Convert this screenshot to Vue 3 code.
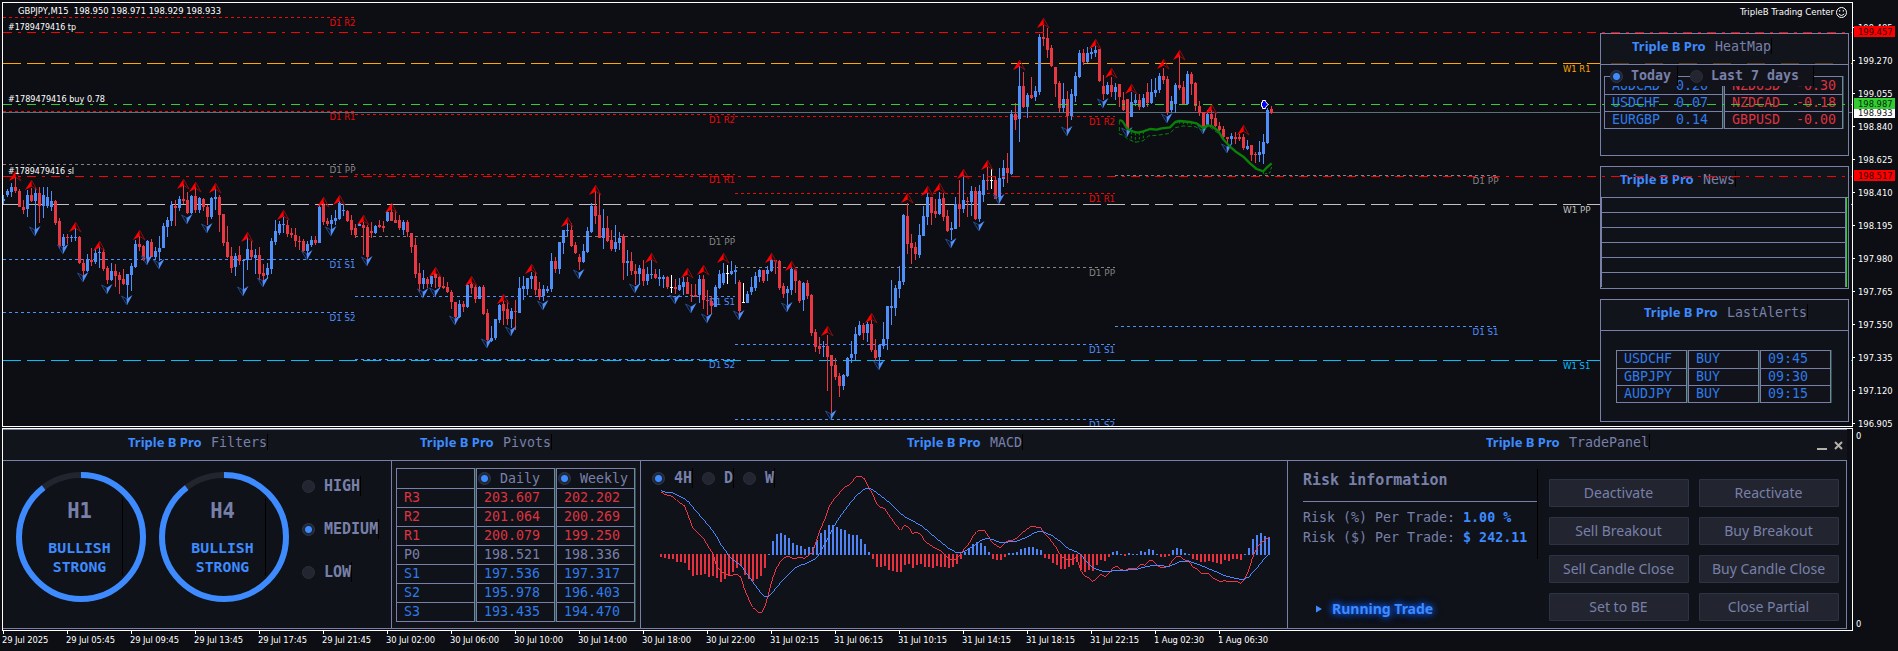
<template>
  <div class="terminal">
    <div class="chart">
      <svg class="chart-canvas" viewBox="3 3 1849 423" width="1849" height="423">
        <g shape-rendering="crispEdges">
          <line
            v-for="(l, i) in levels"
            :key="'l' + i"
            :x1="l.x1"
            :x2="l.x2"
            :y1="l.y + 0.5"
            :y2="l.y + 0.5"
            :stroke="l.color"
            :stroke-dasharray="l.dash"
          />
        </g>
        <text
          v-for="(l, i) in levelLabels"
          :key="'t' + i"
          :x="l.x"
          :y="l.y"
          :fill="l.color"
          text-anchor="end"
          :textLength="l.width"
          lengthAdjust="spacingAndGlyphs"
        >{{ l.text }}</text>
        <g shape-rendering="crispEdges">
          <g v-for="(c, i) in candles" :key="'c' + i" :fill="c.color">
            <rect :x="c.x" :y="c.high" width="1" :height="Math.max(1, c.low - c.high)" />
            <rect :x="c.x - 1" :y="c.top" width="3" :height="Math.max(1, c.bottom - c.top)" />
          </g>
        </g>
        <g v-for="(a, i) in upArrows" :key="'u' + i" :transform="`translate(${a.x} ${a.y})`">
          <path d="M0.5 0L6 10L0.5 6" fill="none" stroke="#8e0c10" />
          <path d="M0.5 0L-6 10L0.8 6.5Z" fill="#ff0000" />
        </g>
        <g v-for="(a, i) in downArrows" :key="'d' + i" :transform="`translate(${a.x} ${a.y})`">
          <path d="M0 0L-5.5 -9L0 -6" fill="none" stroke="#234a8c" />
          <path d="M0 0L5.5 -10L-0.5 -6Z" fill="#4f90ff" />
        </g>
        <g transform="translate(990 0) scale(0.33333)" fill="none" stroke="#0a820a">
          <polyline :points="trendLine" stroke-width="7" stroke-linejoin="round" />
          <polyline :points="trendShadow" stroke-width="3" stroke-dasharray="12 7" />
          <path d="M424 395V418M436 398V427M448 398V418M460 394V422M568 363V376M580 364V378M592 365V378M604 366V378" stroke-width="3" stroke-dasharray="8 5" />
          <path d="M820 514V523L840 518L845 500" stroke-width="3" stroke-dasharray="8 5" />
        </g>
        <g class="symbol" fill="#fff">
          <text x="18" y="14" textLength="203" lengthAdjust="spacingAndGlyphs">GBPJPY,M15&nbsp; 198.950 198.971 198.929 198.933</text>
          <text x="8" y="30" textLength="68" lengthAdjust="spacingAndGlyphs">#1789479416 tp</text>
          <text x="8" y="102" textLength="97" lengthAdjust="spacingAndGlyphs">#1789479416 buy 0.78</text>
          <text x="8" y="174" textLength="66" lengthAdjust="spacingAndGlyphs">#1789479416 sl</text>
          <text x="1740" y="15" textLength="94" lengthAdjust="spacingAndGlyphs">TripleB Trading Center</text>
        </g>
        <g fill="none" stroke="#fff">
          <circle cx="1841.5" cy="12.5" r="5" />
          <path d="M1838.8 13.8Q1841.5 17 1844.2 13.8" />
          <path d="M1839.7 10V11.6M1843.3 10V11.6" />
        </g>
      </svg>

      <aside class="side">
        <section class="widget">
          <h3 class="title heat-title"><b>Triple B Pro</b><span>HeatMap</span></h3>
          <i class="weekly-dash"></i>
          <div class="heat-body">
            <div class="grid-cols">
              <ul v-for="(col, i) in heatmap" :key="i" class="col heat-col" :class="i ? 'neg' : 'pos'">
                <li v-for="r in col" :key="r[0]"><span>{{ r[0] }}</span><span>{{ r[1] }}</span></li>
              </ul>
            </div>
            <div class="heat-range">
              <label class="today"><i class="radio on"></i>Today</label>
              <label><i class="radio"></i>Last 7 days</label>
            </div>
          </div>
        </section>
        <section class="widget">
          <h3 class="title news-title"><b>Triple B Pro</b><span>News</span></h3>
          <ul class="news"><li v-for="n in 6" :key="n"></li></ul>
        </section>
        <section class="widget">
          <h3 class="title alerts-title"><b>Triple B Pro</b><span>LastAlerts</span></h3>
          <div class="grid-cols alerts">
            <ul v-for="(col, i) in alerts" :key="i" class="col pos">
              <li v-for="(v, j) in col" :key="j">{{ v }}</li>
            </ul>
          </div>
        </section>
      </aside>

      <svg class="chart-canvas orders" viewBox="3 3 1849 423" width="1849" height="423">
        <g shape-rendering="crispEdges" stroke-dasharray="9 6 3 6">
          <line x1="3" x2="1852" y1="32.5" y2="32.5" stroke="#ff0000" />
          <line x1="3" x2="1852" y1="104.5" y2="104.5" stroke="#32cd32" />
          <line x1="3" x2="1852" y1="176.5" y2="176.5" stroke="#ff0000" />
        </g>
        <path d="M1262.5 102.5V100.5H1265.5V101.5L1268 104.5L1265.5 107.5V108.5H1262.5V106.5H1261.5V102.5Z" fill="#0000ff" stroke="#fff" />
      </svg>
    </div>

    <div class="price-axis">
      <div v-for="p in prices" :key="p" class="price">{{ p }}</div>
      <span class="tag red tp">199.457</span>
      <span class="tag green">198.987</span>
      <span class="tag white">198.933</span>
      <span class="tag red sl">198.517</span>
    </div>

    <div class="pane">
      <div class="dock">
        <section class="module">
          <h3 class="title filters-title"><b>Triple B Pro</b><span>Filters</span></h3>
          <div class="body filters">
            <div v-for="g in ['H1', 'H4']" :key="g" class="gauge">
              <svg width="130" height="130" viewBox="0 0 130 130">
                <circle cx="65" cy="65" r="62" />
                <circle class="value" cx="65" cy="65" r="62" pathLength="100" transform="rotate(-90 65 65)" />
              </svg>
              <div class="gauge-text">
                <strong>{{ g }}</strong>
                <em>BULLISH</em>
                <em>STRONG</em>
              </div>
            </div>
            <div class="strength">
              <label v-for="s in ['HIGH', 'MEDIUM', 'LOW']" :key="s">
                <i class="radio" :class="{ on: s === 'MEDIUM' }"></i><span>{{ s }}</span>
              </label>
            </div>
          </div>
        </section>

        <section class="module">
          <h3 class="title pivots-title"><b>Triple B Pro</b><span>Pivots</span></h3>
          <div class="body pivots">
            <div class="grid-cols">
              <ul class="col">
                <li></li>
                <li v-for="p in pivots" :key="p[0]" :class="p[3]">{{ p[0] }}</li>
              </ul>
              <ul v-for="(name, i) in ['Daily', 'Weekly']" :key="name" class="col">
                <li class="head"><i class="radio on"></i>{{ name }}</li>
                <li v-for="p in pivots" :key="p[0]" :class="p[3]">{{ p[i + 1] }}</li>
              </ul>
            </div>
          </div>
        </section>

        <section class="module">
          <h3 class="title macd-title"><b>Triple B Pro</b><span>MACD</span></h3>
          <div class="body macd">
            <svg width="646" height="167" viewBox="641 461 646 167" shape-rendering="crispEdges">
              <rect
                v-for="(v, i) in histogram"
                :key="i"
                :x="660 + i * 4"
                :y="v > 0 ? 555 - v : 554"
                width="2"
                :height="Math.abs(v)"
                :fill="v > 0 ? '#4f83f5' : '#e8303e'"
              />
              <g transform="translate(640 425) scale(0.33333)" fill="none" stroke-width="3">
                <polyline :points="macdLine" stroke="#ee3744" />
                <polyline :points="signalLine" stroke="#4f87ff" />
              </g>
            </svg>
            <div class="timeframes">
              <label v-for="t in ['4H', 'D', 'W']" :key="t">
                <i class="radio" :class="{ on: t === '4H' }"></i><span>{{ t }}</span>
              </label>
            </div>
          </div>
        </section>

        <section class="module">
          <h3 class="title trade-title">
            <b>Triple B Pro</b><span>TradePanel</span>
            <svg class="window-icons" width="28" height="12" viewBox="0 0 28 12">
              <path d="M0 9H10M18 2L25 9M25 2L18 9" stroke="#b4b0aa" stroke-width="2" fill="none" />
            </svg>
          </h3>
          <div class="body trade">
            <div class="risk">
              <div class="risk-info">
                <h4>Risk information</h4>
                <p>Risk (%) Per Trade: <b>1.00 %</b></p>
                <p>Risk ($) Per Trade: <b>$ 242.11</b></p>
              </div>
              <div class="running">
                <svg width="6" height="8" viewBox="0 0 6 8"><path d="M0 0.5L6 4L0 7.5Z" fill="#3d8bff" /></svg>
                <span>Running Trade</span>
              </div>
            </div>
            <div class="actions">
              <button v-for="a in actions" :key="a">{{ a }}</button>
            </div>
          </div>
        </section>
      </div>
    </div>

    <div class="sub-axis"><span>0</span><span>0</span></div>

    <div class="time-axis">
      <span v-for="t in times" :key="t">{{ t }}</span>
    </div>
  </div>
</template>

<script setup>
const RED = "#e83843";
const BLUE = "#4f8ff9";

// color, high, body top, body bottom, low
const rawCandles = `b195,199,201,204 b189,191,195,197 b183,187,192,197 r177,187,191,193 r189,191,207,207 r200,207,210,214
b190,195,209,217 r188,195,201,202 b187,193,201,230 r187,193,206,223 b187,195,206,218 b187,197,206,208 b191,201,207,211
r200,201,223,225 r218,221,246,249 b234,237,246,250 r234,237,238,244 b235,237,238,242 b228,237,238,241 r236,237,263,264
r259,263,271,276 b254,259,271,272 r248,260,262,266 b248,253,262,264 b246,252,253,268 r248,252,269,271 r266,268,280,284
b263,271,280,281 r264,271,276,287 r272,275,280,294 r269,279,284,285 b274,274,285,298 b263,266,275,291 b240,244,267,268
r236,244,247,251 r245,246,260,261 b240,241,259,261 r239,242,257,257 b247,251,257,260 b236,248,252,261 b223,226,248,248
b217,220,227,237 b201,205,221,226 r200,206,208,226 b196,199,208,211 r184,199,201,204 r192,200,213,214 b195,196,213,214
r187,196,210,213 b197,198,210,213 r198,199,207,211 r205,207,217,225 b197,198,217,219 b189,197,199,210 r195,197,215,232
r214,214,243,246 r226,242,257,258 r247,256,268,273 b253,256,267,276 r246,255,261,265 b259,260,261,290 b237,249,260,270
r241,250,257,259 b249,255,258,274 r247,255,274,280 r264,273,276,284 b263,268,275,279 b238,241,269,274 b220,231,242,245
b221,224,233,235 b217,224,225,233 r220,225,234,237 r228,233,235,238 r228,235,241,247 r236,241,242,250 r239,241,251,252
b241,244,251,256 b236,240,245,247 r236,240,243,245 b205,207,243,243 r202,205,222,225 r218,221,224,226 b215,220,224,230
b210,218,221,225 b201,203,219,220 b204,210,211,216 r210,211,221,222 r215,220,230,235 r224,228,235,238 b223,224,226,226
r222,225,228,255 r225,227,257,260 r222,231,233,238 b225,226,233,234 r220,225,227,228 r221,226,228,232 b211,212,221,222
r205,212,221,221 r210,220,223,223 r215,220,228,230 b220,222,230,235 r220,222,232,237 r233,233,247,253 r238,245,274,278
r263,273,284,292 b270,278,284,289 r277,279,284,288 b276,276,284,287 r273,274,278,288 r276,277,287,289 r277,286,288,289
r282,287,292,293 r290,292,302,309 r302,302,317,318 b300,304,317,318 r301,304,307,312 b284,285,307,308 r282,284,288,294
r285,287,299,303 b286,287,299,299 r285,287,314,315 r309,313,340,341 b326,338,341,342 b319,319,338,340 b304,305,320,323
r301,304,311,325 r300,309,319,325 b308,311,319,328 r300,311,312,330 b277,288,313,313 b276,286,289,300 b278,278,289,295
b272,276,279,289 r272,276,290,295 r282,289,297,300 b285,289,296,301 b286,289,291,293 b253,261,289,292 r257,261,269,273
b242,242,269,274 b230,230,243,254 b223,230,231,236 r223,230,246,247 r242,245,253,254 r254,257,262,270 b244,251,262,263
b227,231,252,253 b203,206,232,233 r191,206,216,224 r193,215,238,238 b209,228,238,249 r216,228,241,242 r230,240,249,251
b225,242,249,252 b232,238,243,250 r234,236,263,280 b250,261,263,276 r252,261,271,275 r264,271,274,285 b265,268,274,285
r260,269,281,286 b267,274,281,285 b260,274,275,279 r269,274,278,279 b269,277,279,286 b275,277,279,288 r276,277,287,289
w275,287,288,293 r279,287,289,294 b278,285,290,291 b277,282,287,295 r277,282,294,294 r284,295,296,302 r284,295,297,297
b275,279,295,303 r275,279,300,309 r290,300,301,315 r296,301,306,314 b285,287,307,307 b270,274,288,289 b263,273,283,285
w265,273,274,284 b261,271,274,275 b265,270,272,284 r280,282,311,314 w283,302,303,303 b291,294,303,303 b277,287,292,295
b272,276,288,291 b269,270,277,282 r270,270,281,283 b266,270,274,281 b259,260,271,272 r260,260,262,274 r260,261,288,290
r283,286,294,298 b286,289,293,305 b267,269,290,295 r269,269,281,293 r280,281,301,303 b282,283,300,311 r280,283,296,299
r294,295,333,336 r329,332,347,352 r337,346,349,354 b341,346,347,357 r335,346,357,391 r355,355,366,413 r358,365,377,380
r373,376,386,397 b374,375,386,390 b357,358,376,377 b341,354,358,363 b327,334,354,360 b321,325,335,336 r323,325,333,340
b322,324,333,342 r320,324,350,352 r339,350,358,361 b344,345,357,366 b322,339,346,349 b306,306,339,350 b280,306,308,325
b285,288,308,316 b266,281,289,298 b214,215,282,285 r203,216,244,254 r234,243,248,264 r242,247,254,260 b224,235,255,258
b206,216,236,236 b193,197,217,225 r197,197,213,225 r199,211,214,218 b192,199,214,215 r193,198,217,221 r210,216,231,232
b222,228,230,240 b197,204,229,229 r180,204,209,227 b175,200,209,213 r197,201,202,217 b186,191,202,216 r187,191,219,220
b185,191,219,222 b174,180,195,202 r167,180,181,190 w169,180,181,189 r177,180,199,199 b168,178,197,198 b160,168,179,187
r153,168,173,183 b110,114,174,175 r103,114,120,130 b66,86,119,142 r72,86,107,108 b93,95,107,118 r77,95,98,99
b86,91,97,101 b34,37,92,95 r25,37,39,46 r28,38,50,58 r45,48,66,67 r67,67,84,97 r81,83,108,112 b83,99,108,112
r91,99,116,130 b89,94,116,120 b72,76,96,102 b50,53,77,78 r49,53,62,65 b47,53,62,63 b48,52,54,59 b46,50,53,57
r49,49,81,82 r75,86,94,100 b82,85,94,95 r77,85,92,97 b83,87,92,100 r84,84,97,107 r92,100,110,111 r99,99,129,134
b92,102,117,117 b94,100,103,106 r94,100,107,110 b94,98,107,108 r83,92,103,107 b79,92,103,104 b78,90,93,97 b73,76,90,93
r68,76,80,84 r76,79,112,115 b96,101,110,112 b83,85,104,113 r55,85,88,90 r81,87,104,104 b71,74,104,105 r72,74,84,95
r82,83,106,111 r101,106,113,116 r112,112,128,130 b110,114,125,127 r110,114,119,125 r113,118,126,127 r122,126,130,131
r126,129,137,140 r137,137,139,144 b133,136,139,144 r132,137,139,144 r134,137,139,141 r134,137,148,150 b140,146,149,150
r145,145,155,161 r152,154,155,163 b141,152,155,162 b134,142,154,164 b108,110,143,144 r106,109,113,114`;

const candles = rawCandles.split(/\s+/).map((s, i) => {
  const [high, top, bottom, low] = s.slice(1).split(",").map(Number);
  const color = { r: RED, b: BLUE, w: "#ffffff" }[s[0]];
  return { x: 3 + i * 4, high, top, bottom, low, color };
});

const toArrows = (str) =>
  str.split(" ").map((s) => {
    const [i, y] = s.split(":").map(Number);
    return { x: 3 + i * 4, y };
  });

const upArrows = toArrows(
  "3:171 7:180 18:222 24:241 34:230 45:179 48:182 53:183 61:232 70:210 80:197 84:195 90:215 97:203 108:267 117:276 125:294 132:264 141:217 148:185 162:253 171:268 175:265 180:253 192:253 197:261 206:326 217:313 226:193 231:186 234:183 240:169 246:160 254:60 260:18 273:39 277:68 282:84 290:59 294:50 302:104 310:125"
);
const downArrows = toArrows(
  "8:236 15:254 20:282 26:294 31:305 36:265 39:269 46:224 51:233 60:296 65:287 76:260 82:236 91:266 105:298 108:297 113:325 121:348 127:336 135:310 144:279 158:293 168:304 172:313 176:323 184:320 196:312 207:420 219:370 237:248 244:231 249:204 266:136 275:108 281:137 291:123 300:134 306:153"
);

// daily pivots: one set per session, then weekly ones across the chart
const sessions = [
  { x1: 3, x2: 354, end: 355.5, lines: [["R2", 17], ["R1", 111], ["PP", 164], ["S1", 259], ["S2", 312]] },
  { x1: 355, x2: 735, end: 735, lines: [["R2", 114], ["R1", 174], ["PP", 236], ["S1", 296], ["S2", 359]] },
  { x1: 735, x2: 1115, end: 1115, lines: [["R2", 116], ["R1", 193], ["PP", 267], ["S1", 344], ["S2", 419]] },
  { x1: 1115, x2: 1497, end: 1498.5, lines: [["PP", 175], ["S1", 326]] },
];
const dailyColor = { R: "#ea0a0a", P: "#848484", S: BLUE };
const weekly = [
  ["W1 R1", 63, "#ffa500"],
  ["W1 PP", 204, "#c0c0c0"],
  ["W1 S1", 360, "#00bfff"],
];

const levels = [];
const levelLabels = [];
weekly.forEach(([text, y, color]) => {
  levels.push({ x1: 3, x2: 1852, y, color, dash: "18 6" });
  levelLabels.push({ x: 1590.5, y: y + 8.6, color, text, width: 27.5 });
});
levels.push({ x1: 3, x2: 1852, y: 112, color: "#5c6f7c", dash: "none" });
sessions.forEach((s) => {
  s.lines.forEach(([name, y]) => {
    const color = dailyColor[name[0]];
    levels.push({ x1: s.x1, x2: s.x2, y, color, dash: "3 3" });
    levelLabels.push({ x: s.end, y: y + 8.7, color, text: "D1 " + name, width: 26 });
  });
});

const trendLine =
  "388,360 397,363 412,387 430,395 444,398 460,394 480,387 500,389 515,385 540,382 556,366 568,363 600,366 620,370 640,384 652,376 665,378 685,393 700,418 720,440 740,457 760,470 780,490 800,507 820,514 830,503 845,490";
const trendShadow =
  "388,362 388,402 402,407 412,416 436,427 460,422 475,408 508,405 540,400 556,383 580,378 615,380 640,392 655,378 685,400";

const prices = ["199.485", "199.270", "199.055", "198.840", "198.625", "198.410", "198.195", "197.980", "197.765", "197.550", "197.335", "197.120", "196.905"];

const times = [
  "29 Jul 2025", "29 Jul 05:45", "29 Jul 09:45", "29 Jul 13:45", "29 Jul 17:45", "29 Jul 21:45",
  "30 Jul 02:00", "30 Jul 06:00", "30 Jul 10:00", "30 Jul 14:00", "30 Jul 18:00", "30 Jul 22:00",
  "31 Jul 02:15", "31 Jul 06:15", "31 Jul 10:15", "31 Jul 14:15", "31 Jul 18:15", "31 Jul 22:15",
  "1 Aug 02:30", "1 Aug 06:30",
];

const heatmap = [
  [["AUDCAD", "0.26"], ["USDCHF", "0.07"], ["EURGBP", "0.14"]],
  [["NZDUSD", "-0.30"], ["NZDCAD", "-0.18"], ["GBPUSD", "-0.00"]],
];

const alerts = [
  ["USDCHF", "GBPJPY", "AUDJPY"],
  ["BUY", "BUY", "BUY"],
  ["09:45", "09:30", "09:15"],
];

const pivots = [
  ["R3", "203.607", "202.202", "neg"],
  ["R2", "201.064", "200.269", "neg"],
  ["R1", "200.079", "199.250", "neg"],
  ["P0", "198.521", "198.336", ""],
  ["S1", "197.536", "197.317", "pos"],
  ["S2", "195.978", "196.403", "pos"],
  ["S3", "193.435", "194.470", "pos"],
];

const actions = [
  "Deactivate", "Reactivate",
  "Sell Breakout", "Buy Breakout",
  "Sell Candle Close", "Buy Candle Close",
  "Set to BE", "Close Partial",
];

const histogram = [
  -3, -4, -5, -5, -8, -8, -9, -16, -22, -21, -21, -20, -23, -22, -24, -28, -25, -22, -18, -14, -12, -21, -25, -27, -25, -22, -14,
  1, 14, 21, 22, 20, 17, 12, 10, 9, 6, 8, 8, 15, 22, 25, 30, 30, 28, 26, 25, 21, 20, 20, 16, 11, 3,
  -5, -13, -13, -12, -16, -17, -18, -18, -11, -10, -14, -11, -10, -13, -13, -14, -12, -13, -13, -14, -13, -10, -5,
  3, 6, 11, 13, 12, 9, 3, -5, -6, -6, -3, 2, 2, 3, 6, 7, 8, 8, 6, 5,
  -4, -5, -9, -11, -15, -15, -13, -11, -8, -16, -18, -16, -17, -11, -6, -7, -3, 3, 4, 1, -2, 2, 1, 1, 4, 3, 6, 5, 1,
  -3, -3, -2, 5, 7, 6, 2, 1, -5, -6, -8, -8, -7, -8, -9, -10, -6, -7, -5, -5, -6, 1, 7, 16, 20, 22, 19, 18,
];

const macdLine =
  "62,200 74,208 98,214 110,226 134,243 158,307 182,332 194,345 206,368 218,384 230,424 242,438 266,452 290,448 302,456 314,494 326,522 338,547 356,563 366,561 374,547 386,506 398,459 410,428 422,409 434,397 446,394 458,401 482,397 494,401 506,390 518,382 530,345 542,310 554,285 566,248 578,228 590,214 614,186 626,181 638,168 650,154 662,154 674,162 686,188 698,207 710,236 722,247 734,250 746,270 758,285 770,303 782,316 794,301 806,307 818,326 830,321 842,328 854,347 866,357 890,372 902,377 914,390 926,401 938,406 950,403 962,386 974,370 986,357 998,335 1010,320 1022,315 1034,317 1046,335 1058,355 1070,362 1082,368 1094,354 1106,346 1118,346 1130,340 1142,327 1160,313 1172,305 1202,307 1214,327 1226,338 1238,354 1250,370 1262,392 1274,401 1286,405 1310,398 1322,436 1334,453 1346,459 1358,470 1370,460 1382,448 1394,455 1406,446 1418,430 1430,424 1442,433 1454,437 1466,430 1490,430 1502,417 1514,421 1526,408 1538,408 1550,420 1562,428 1574,427 1586,424 1598,405 1610,394 1622,395 1634,405 1646,408 1658,425 1670,432 1682,444 1706,446 1718,458 1742,470 1754,467 1766,470 1790,469 1802,476 1814,462 1826,436 1838,397 1850,370 1862,353 1874,346 1888,335";
const signalLine =
  "62,196 74,201 98,203 110,210 134,222 146,231 158,246 182,274 206,302 218,317 230,335 242,358 254,373 266,392 278,404 302,421 314,437 338,470 362,503 374,515 386,514 398,502 422,473 446,447 470,426 482,420 494,418 518,406 530,398 542,380 554,357 566,335 578,310 602,272 626,240 650,211 674,192 690,190 710,203 746,231 770,255 794,275 842,301 866,320 890,341 926,370 950,383 966,383 1002,362 1014,353 1026,345 1040,341 1058,343 1080,353 1106,351 1130,349 1160,337 1180,325 1198,319 1214,322 1238,333 1262,350 1274,363 1286,371 1310,381 1322,389 1334,403 1346,417 1358,427 1370,433 1394,440 1418,438 1450,436 1490,433 1506,428 1538,421 1560,421 1586,425 1602,418 1622,408 1646,409 1670,416 1694,426 1730,441 1754,452 1778,458 1806,464 1826,456 1850,430 1874,400 1886,388";
</script>

<style>
body {
  background: #0e0e13;
}
</style>

<style scoped>
.terminal {
  display: grid;
  grid-template-columns: 1853px 45px;
  grid-template-rows: 428px 203px 20px;
  width: 1898px;
  height: 651px;
  overflow: hidden;
  background: #0d0e13;
  color: #7880aa;
  font-family: "DejaVu Sans Mono", monospace;
  font-size: 13.3px;
}
ul,
h3,
h4,
p {
  margin: 0;
  padding: 0;
  list-style: none;
  font-size: inherit;
  font-weight: normal;
}
.chart {
  position: relative;
  box-sizing: border-box;
  width: 1851px;
  height: 425px;
  margin: 2px 0 0 2px;
  border: 1px solid #fff;
}
.chart-canvas {
  display: block;
  font-family: "DejaVu Sans Condensed", "DejaVu Sans", sans-serif;
  font-size: 9.3px;
}
.orders {
  position: absolute;
  left: 0;
  top: 0;
}

/* floating widgets */
.side {
  position: absolute;
  left: 1597px;
  top: 30px;
  display: flex;
  flex-direction: column;
  gap: 10px;
}
.widget {
  position: relative;
  box-sizing: border-box;
  width: 249px;
  height: 123px;
  border: 1px solid #7880aa;
  background: #101219;
}
.title {
  display: flex;
  align-items: center;
  box-sizing: border-box;
  height: 31px;
  border-bottom: 1px solid #7880aa;
  background: #12141b;
  white-space: nowrap;
}
.widget .title {
  padding-bottom: 7px;
}
.title b {
  width: 75px;
  margin-right: 8px;
  color: #3d8bff;
  font-family: "Noto Sans", sans-serif;
  font-size: 13px;
  font-weight: bold;
}
.title span {
  height: 16px;
  line-height: 17px;
  border-right: 1px solid #000;
}
.widget .heat-title {
  padding-left: 31px;
}
.news-title {
  padding-left: 19px;
}
.alerts-title {
  padding-left: 43px;
}
.weekly-dash {
  position: absolute;
  left: 0;
  right: 0;
  top: 29px;
  height: 1px;
  background: repeating-linear-gradient(90deg, transparent 0 10px, #50381c 10px 28px, transparent 28px 34px);
}
.grid-cols {
  display: flex;
  align-items: flex-start;
  gap: 1px;
}
.col {
  box-sizing: border-box;
  width: 71px;
  border: 1px solid #7880aa;
  background: #12121a;
  box-shadow: 1px 0 #24543f;
}
.col li {
  box-sizing: border-box;
  height: 17px;
  padding-left: 7px;
  line-height: 16px;
  white-space: pre;
}
.col li + li {
  border-top: 1px solid #7880aa;
}
.pos {
  color: #2f7be8;
}
.neg {
  color: #dc3440;
}
.heat-body {
  position: relative;
  padding: 11px 0 0 3px;
}
.heat-col {
  width: 119px;
}
.heat-col li {
  display: flex;
  justify-content: space-between;
  padding: 0 6px 0 7px;
}
.heat-col li:first-child {
  padding-top: 1px;
}
.heat-col.pos li {
  padding-right: 14px;
}
.heat-range {
  position: absolute;
  left: 9px;
  top: 1px;
  display: flex;
  gap: 12px;
  font-weight: bold;
}
.heat-range label {
  display: flex;
  align-items: center;
  height: 20px;
  padding-right: 14px;
  border-right: 1px solid #000;
  background: #12131a;
  line-height: 18px;
}
.heat-range .today {
  padding-right: 6px;
}
.heat-range .radio {
  margin-right: 8px;
}
.radio {
  display: block;
  box-sizing: border-box;
  width: 13px;
  height: 13px;
  margin-right: 9px;
  border: 1px solid #2c2f3a;
  border-radius: 50%;
  background: #232631;
}
.radio.on {
  border-color: #2e3a52;
  background: radial-gradient(circle, #3d8bff 0 3px, #1f2635 4px);
}
.news {
  margin: -1px 2px 0 0;
  border-left: 1px solid #7880aa;
  border-right: 1px solid #7880aa;
  box-shadow: 1px 0 #14e214;
}
.news li {
  box-sizing: border-box;
  height: 15px;
  border-top: 1px solid #7880aa;
}
.alerts {
  padding: 19px 0 0 15px;
}

/* price and time scales */
.price-axis,
.sub-axis,
.time-axis {
  color: #fff;
  font-family: "DejaVu Sans Condensed", "DejaVu Sans", sans-serif;
  font-size: 9.3px;
}
.price-axis {
  position: relative;
  box-sizing: border-box;
  padding-top: 11px;
  overflow: hidden;
}
.price {
  height: 33px;
  padding-left: 5px;
  line-height: 33px;
  background: linear-gradient(#fff, #fff) no-repeat 0 16px / 2px 1px;
}
.tag {
  position: absolute;
  left: 1px;
  box-sizing: border-box;
  width: 41px;
  height: 11px;
  padding-left: 4px;
  line-height: 11px;
}
.tag.red {
  background: #ff0000;
  color: #2a0000;
}
.tag.tp {
  top: 26px;
}
.tag.green {
  top: 98px;
  background: #32cd32;
  color: #062a06;
}
.tag.white {
  top: 109px;
  height: 9px;
  line-height: 8px;
  background: #fff;
  color: #111;
}
.tag.sl {
  top: 170px;
}
.sub-axis {
  display: flex;
  flex-direction: column;
  justify-content: space-between;
  padding: 2px 0 1px 3px;
}
.sub-axis span {
  line-height: 12px;
}
.time-axis {
  grid-column: 1 / 3;
  display: flex;
  padding-left: 2px;
}
.time-axis span {
  width: 62px;
  padding-right: 2px;
  line-height: 17px;
  letter-spacing: -0.1px;
  white-space: nowrap;
  background: linear-gradient(#fff, #fff) no-repeat 1px 0 / 1px 3px;
}

/* docked modules */
.pane {
  box-sizing: border-box;
  width: 1851px;
  height: 203px;
  margin-left: 2px;
  border: 1px solid #fff;
}
.dock {
  display: grid;
  grid-template-columns: 389px 249px 647px 559px;
  box-sizing: border-box;
  width: 1844px;
  height: 200px;
  border: solid #7880aa;
  border-width: 1px 0;
}
.module {
  display: flex;
  flex-direction: column;
}
.dock .title {
  padding-bottom: 7px;
}
.dock .filters-title {
  padding-left: 125px;
}
.dock .pivots-title {
  padding-left: 28px;
}
.dock .macd-title {
  padding-left: 266px;
}
.dock .trade-title {
  padding-left: 198px;
}
.window-icons {
  margin: 8px 0 0 167px;
}
.body {
  flex: 1;
  display: flex;
  box-sizing: border-box;
  height: 167px;
  border-right: 1px solid #7880aa;
  background: #0f1218;
}
.filters {
  padding: 11px 0 0 13px;
  gap: 13px;
}
.gauge {
  position: relative;
  width: 130px;
  height: 130px;
}
.gauge circle {
  fill: none;
  stroke: #22242e;
  stroke-width: 6;
}
.gauge .value {
  stroke: #3d8bff;
  stroke-dasharray: 89.7 100;
}
.gauge-text {
  position: absolute;
  left: 21px;
  top: 26px;
  display: flex;
  flex-direction: column;
  align-items: center;
  width: 85px;
  height: 78px;
  border-right: 1px solid #000;
  font-weight: bold;
}
.gauge-text strong {
  margin-bottom: 14px;
  font-size: 20.5px;
  line-height: 26px;
}
.gauge-text em {
  color: #3d8bff;
  font-size: 14.8px;
  font-style: normal;
  line-height: 19px;
}
.strength {
  display: flex;
  flex-direction: column;
  gap: 23px;
  padding: 4px 0 0 0;
  font-size: 15px;
  font-weight: bold;
}
.strength label,
.timeframes label {
  display: flex;
  align-items: center;
  height: 20px;
}
.strength span,
.timeframes span {
  line-height: 20px;
  border-right: 1px solid #000;
}
.pivots {
  padding: 7px 0 0 4px;
  background: #12121a;
}
.pivots .col {
  width: 79px;
  background: #101219;
}
.pivots .col li {
  height: 19px;
  line-height: 18px;
}
.pivots .head {
  display: flex;
  align-items: center;
}
.pivots .col .head {
  padding-left: 1px;
}
.macd {
  position: relative;
}
.timeframes {
  position: absolute;
  left: 11px;
  top: 7px;
  display: flex;
  gap: 9px;
  font-size: 15px;
  font-weight: bold;
}
.timeframes .radio {
  margin-right: 9px;
}
.trade {
  padding-left: 15px;
}
.risk {
  display: flex;
  flex-direction: column;
  width: 235px;
  padding-top: 8px;
  font-weight: bold;
}
.risk-info {
  height: 90px;
  border-right: 1px solid #000;
}
.risk h4 {
  height: 32px;
  margin-bottom: 6px;
  border-bottom: 1px solid #7880aa;
  font-size: 15px;
  font-weight: bold;
  line-height: 23px;
}
.risk p {
  font-size: 13.3px;
  line-height: 20px;
  white-space: pre;
}
.risk b {
  color: #3d8bff;
}
.running {
  display: flex;
  align-items: center;
  gap: 10px;
  margin: 39px 0 0 13px;
  color: #3d8bff;
  font-family: "Noto Sans", sans-serif;
  font-size: 14px;
  line-height: 22px;
  text-shadow: 0 0 6px #0b5cff, 0 0 10px #0b4fd8;
}
.actions {
  display: grid;
  grid-template-columns: 140px 140px;
  grid-auto-rows: 28px;
  gap: 10px;
  padding: 18px 0 0 11px;
}
.actions button {
  box-sizing: border-box;
  padding: 0 1px 2px 0;
  border: 1px solid #2c3344;
  border-radius: 1px;
  background: #22252f;
  color: #7880aa;
  font-family: "Noto Sans", sans-serif;
  font-size: 14px;
}
</style>
